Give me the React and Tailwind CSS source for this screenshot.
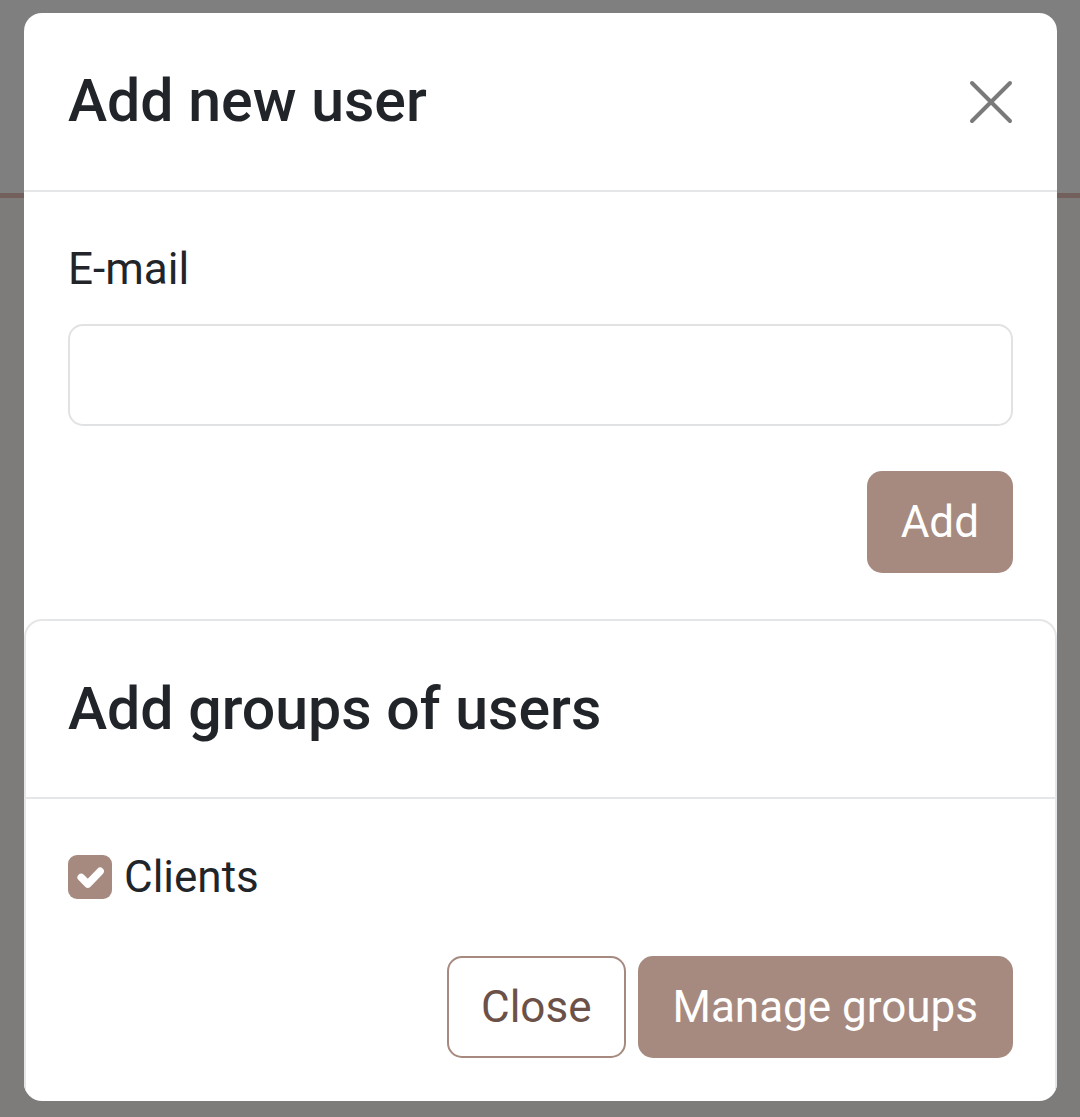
export default function App() {
  return (
    <div className="relative min-h-[1117px] bg-[#7f7f7f] font-['Roboto',_'Liberation_Sans',_sans-serif] text-[#212529]">
      {/* page behind the backdrop */}
      <div className="h-[193px]" />
      <div className="h-[5px] bg-[#735f5b]" />
      <div className="h-[919px] bg-[#7d7c7b]" />

      {/* modal overlay */}
      <div className="absolute inset-0 flex justify-center pl-[24px] pr-[23px] pt-[13px]">
        <div className="flex h-[1088px] w-full flex-col overflow-hidden rounded-[18px] bg-white">
          {/* header */}
          <div className="flex h-[179px] shrink-0 items-center justify-between border-b-2 border-[#e4e6e8] pl-[44px] pr-[44px]">
            <h5 className="text-[59px] font-medium leading-[1.2]">Add new user</h5>
            <button className="flex h-[44px] w-[44px] items-center justify-center">
              <svg width="44" height="44" viewBox="0 0 44 44" fill="none">
                <path d="M3 3L41 41M41 3L3 41" stroke="#7a7a7a" strokeWidth="4" strokeLinecap="round" />
              </svg>
            </button>
          </div>

          {/* body */}
          <div className="flex flex-col px-[44px] pb-[46px] pt-[43px]">
            <label className="text-[44px] leading-[1.55]">E-mail</label>
            <input
              type="email"
              className="mt-[21px] h-[102px] w-full rounded-[15px] border-2 border-[#e0e2e4] px-[30px] text-[44px] outline-none"
            />
            <div className="mt-[45px] flex justify-end">
              <button className="h-[102px] rounded-[15px] bg-[#a68a7f] px-[34px] text-[44px] text-white">
                Add
              </button>
            </div>
          </div>

          {/* groups card */}
          <div className="flex flex-1 flex-col rounded-t-[18px] border-x-2 border-t-2 border-[#e4e6e8]">
            <div className="flex h-[178px] shrink-0 items-center border-b-2 border-[#e4e6e8] px-[42px]">
              <h5 className="text-[59px] font-medium leading-[1.2]">Add groups of users</h5>
            </div>
            <div className="flex flex-1 flex-col px-[42px] pt-[44px] pb-[43px]">
              <label className="flex items-center gap-[12px] text-[44px] leading-[1.55]">
                <span className="flex h-[44px] w-[44px] items-center justify-center rounded-[9px] bg-[#a68a7f]">
                  <svg width="44" height="44" viewBox="0 0 20 20" fill="none">
                    <path d="M6 10.2l3 3l5.6-5.8" stroke="white" strokeWidth="3.4" strokeLinecap="round" strokeLinejoin="round" />
                  </svg>
                </span>
                Clients
              </label>
              <div className="mt-auto flex justify-end gap-[12px]">
                <button className="h-[102px] rounded-[15px] border-2 border-[#a68a7f] bg-white px-[32px] text-[44px] text-[#6c5148]">
                  Close
                </button>
                <button className="h-[102px] rounded-[15px] bg-[#a68a7f] px-[35px] text-[44px] text-white">
                  Manage groups
                </button>
              </div>
            </div>
          </div>
        </div>
      </div>
    </div>
  );
}
